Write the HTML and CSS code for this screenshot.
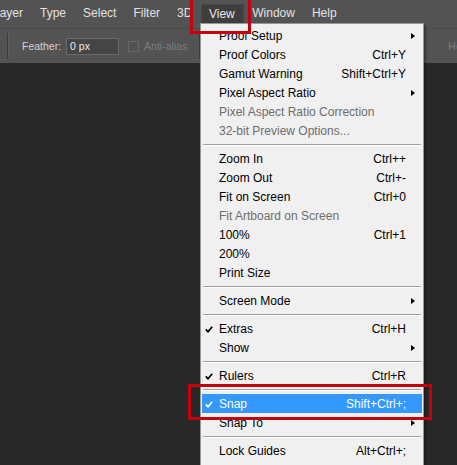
FILE: index.html
```html
<!DOCTYPE html>
<html>
<head>
<meta charset="utf-8">
<link rel="stylesheet" href="styles.css">
</head>
<body>
<div class="app">
  <div class="menubar">
    <span class="mb-item first">Layer</span>
    <span class="mb-item">Type</span>
    <span class="mb-item">Select</span>
    <span class="mb-item">Filter</span>
    <span class="mb-item">3D</span>
    <span class="mb-item active">View</span>
    <span class="mb-item">Window</span>
    <span class="mb-item">Help</span>
  </div>
  <div class="options">
    <span class="vsep"></span>
    <span class="opt-label">Feather:</span>
    <span class="opt-input">0 px</span>
    <span class="opt-check"></span>
    <span class="opt-label dim">Anti-alias</span>
    <span class="vsep sep2"></span>
    <span class="opt-label dim far">Height:</span>
  </div>
  <div class="canvas"></div>

  <div class="menu">
    <div class="mi"><span class="ck"></span><span class="lb">Proof Setup</span><span class="sc"></span><span class="ar"><i class="tri"></i></span></div>
    <div class="mi"><span class="ck"></span><span class="lb">Proof Colors</span><span class="sc">Ctrl+Y</span><span class="ar"></span></div>
    <div class="mi"><span class="ck"></span><span class="lb">Gamut Warning</span><span class="sc">Shift+Ctrl+Y</span><span class="ar"></span></div>
    <div class="mi"><span class="ck"></span><span class="lb">Pixel Aspect Ratio</span><span class="sc"></span><span class="ar"><i class="tri"></i></span></div>
    <div class="mi disabled"><span class="ck"></span><span class="lb">Pixel Aspect Ratio Correction</span><span class="sc"></span><span class="ar"></span></div>
    <div class="mi disabled"><span class="ck"></span><span class="lb">32-bit Preview Options...</span><span class="sc"></span><span class="ar"></span></div>
    <div class="msep"></div>
    <div class="mi"><span class="ck"></span><span class="lb">Zoom In</span><span class="sc">Ctrl++</span><span class="ar"></span></div>
    <div class="mi"><span class="ck"></span><span class="lb">Zoom Out</span><span class="sc">Ctrl+-</span><span class="ar"></span></div>
    <div class="mi"><span class="ck"></span><span class="lb">Fit on Screen</span><span class="sc">Ctrl+0</span><span class="ar"></span></div>
    <div class="mi disabled"><span class="ck"></span><span class="lb">Fit Artboard on Screen</span><span class="sc"></span><span class="ar"></span></div>
    <div class="mi"><span class="ck"></span><span class="lb">100%</span><span class="sc">Ctrl+1</span><span class="ar"></span></div>
    <div class="mi"><span class="ck"></span><span class="lb">200%</span><span class="sc"></span><span class="ar"></span></div>
    <div class="mi"><span class="ck"></span><span class="lb">Print Size</span><span class="sc"></span><span class="ar"></span></div>
    <div class="msep"></div>
    <div class="mi"><span class="ck"></span><span class="lb">Screen Mode</span><span class="sc"></span><span class="ar"><i class="tri"></i></span></div>
    <div class="msep"></div>
    <div class="mi"><span class="ck"><svg width="8" height="7" viewBox="0 0 8 7"><path d="M0.8 3.4 L3 5.8 L7.2 0.8" fill="none" stroke="currentColor" stroke-width="1.7"/></svg></span><span class="lb">Extras</span><span class="sc">Ctrl+H</span><span class="ar"></span></div>
    <div class="mi"><span class="ck"></span><span class="lb">Show</span><span class="sc"></span><span class="ar"><i class="tri"></i></span></div>
    <div class="msep"></div>
    <div class="mi"><span class="ck"><svg width="8" height="7" viewBox="0 0 8 7"><path d="M0.8 3.4 L3 5.8 L7.2 0.8" fill="none" stroke="currentColor" stroke-width="1.7"/></svg></span><span class="lb">Rulers</span><span class="sc">Ctrl+R</span><span class="ar"></span></div>
    <div class="msep"></div>
    <div class="mi hl"><span class="ck"><svg width="8" height="7" viewBox="0 0 8 7"><path d="M0.8 3.4 L3 5.8 L7.2 0.8" fill="none" stroke="currentColor" stroke-width="1.7"/></svg></span><span class="lb">Snap</span><span class="sc">Shift+Ctrl+;</span><span class="ar"></span></div>
    <div class="mi"><span class="ck"></span><span class="lb">Snap To</span><span class="sc"></span><span class="ar"><i class="tri"></i></span></div>
    <div class="msep"></div>
    <div class="mi"><span class="ck"></span><span class="lb">Lock Guides</span><span class="sc">Alt+Ctrl+;</span><span class="ar"></span></div>
  </div>

  <div class="redbox rb-view"></div>
  <div class="redbox rb-snap"></div>
</div>
</body>
</html>
```

FILE: styles.css
```css
html, body {
  margin: 0;
  padding: 0;
  background: #282828;
  overflow: hidden;
}
.app {
  position: relative;
  width: 457px;
  height: 465px;
  overflow: hidden;
  font-family: "Liberation Sans", Arial, sans-serif;
}
.menubar {
  height: 28px;
  box-sizing: border-box;
  background: #535353;
  display: flex;
  align-items: flex-start;
  padding-top: 4px;
  white-space: nowrap;
}
.mb-item {
  font-size: 12px;
  color: #e2e2e2;
  height: 19px;
  line-height: 19px;
  padding: 0 8.5px;
  box-sizing: border-box;
}
.mb-item.first {
  margin-left: -15.5px;
}
.mb-item.active {
  background: #3e3e3e;
  border: 1px solid #474747;
  border-bottom: none;
  line-height: 18px;
  padding: 0 8px 0 7px;
  height: 19px;
  color: #e8e8e8;
}
.options {
  height: 35px;
  box-sizing: border-box;
  background: #535353;
  border-top: 1px solid #4a4a4a;
  display: flex;
  align-items: center;
  white-space: nowrap;
  overflow: hidden;
}
.vsep {
  width: 1px;
  height: 26px;
  background: #3a3a3a;
  border-right: 1px solid #5c5c5c;
  margin-left: 7px;
  flex: none;
}
.opt-label {
  font-size: 10.5px;
  color: #d4d4d4;
  margin-left: 13px;
}
.opt-label.dim {
  color: #7c7c7c;
  margin-left: 5px;
}
.opt-input {
  width: 53px;
  height: 17px;
  box-sizing: border-box;
  background: #454545;
  border: 1px solid #6a6a6a;
  color: #ececec;
  font-size: 10.5px;
  line-height: 15px;
  padding-left: 3px;
  margin-left: 5px;
  flex: none;
}
.opt-check {
  width: 11px;
  height: 11px;
  box-sizing: border-box;
  border: 1px solid #686868;
  margin-left: 9px;
  flex: none;
}
.sep2 {
  margin-left: 12px;
}
.far {
  margin-left: 247px !important;
}
.canvas {
  height: 402px;
  background: #282828;
}

/* dropdown menu */
.menu {
  position: absolute;
  left: 200px;
  top: 23px;
  width: 224px;
  box-sizing: border-box;
  background: #f0f0f0;
  border: 1px solid #979797;
  padding: 2px 1px 10px 1px;
  box-shadow: 2px 2px 2px rgba(0,0,0,0.35);
  font-size: 12px;
  color: #000;
}
.mi {
  display: grid;
  grid-template-columns: 17px 1fr auto 16px;
  height: 19px;
  line-height: 21px;
  align-items: start;
  white-space: nowrap;
}
.mi.disabled {
  color: #6d6d6d;
}
.mi.hl {
  background: #3399ff;
  color: #fff;
}
.ck {
  display: flex;
  align-items: center;
  padding-left: 3px;
  height: 20px;
}
.sc {
  text-align: right;
}
.ar {
  display: flex;
  align-items: center;
  height: 20px;
  padding-left: 5px;
}
.tri {
  display: block;
  width: 0;
  height: 0;
  border-left: 4px solid #000;
  border-top: 3.5px solid transparent;
  border-bottom: 3.5px solid transparent;
}
.msep {
  height: 1px;
  background: #a0a0a0;
  border-bottom: 1px solid #ffffff;
  margin: 4px 1px 3px 1px;
}

/* annotation boxes */
.redbox {
  position: absolute;
  box-sizing: border-box;
  border: 3px solid #c4000c;
}
.rb-view {
  left: 190px;
  top: -4px;
  width: 61px;
  height: 38px;
  border-width: 3.5px;
}
.rb-snap {
  left: 188px;
  top: 384px;
  width: 244px;
  height: 36px;
}
```
